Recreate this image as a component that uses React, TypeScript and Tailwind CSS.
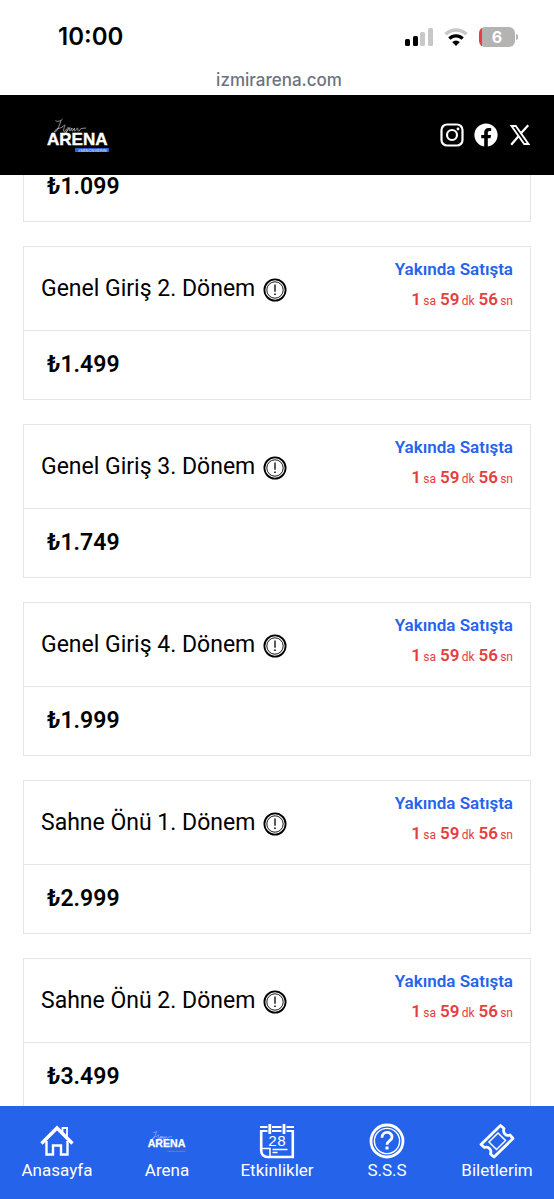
import React from 'react'
import { FaFacebook } from 'react-icons/fa'

interface Ticket {
  title?: string
  price: string
}

const tickets: Ticket[] = [
  { price: '₺1.099' },
  { title: 'Genel Giriş 2. Dönem', price: '₺1.499' },
  { title: 'Genel Giriş 3. Dönem', price: '₺1.749' },
  { title: 'Genel Giriş 4. Dönem', price: '₺1.999' },
  { title: 'Sahne Önü 1. Dönem', price: '₺2.999' },
  { title: 'Sahne Önü 2. Dönem', price: '₺3.499' },
]

const countdown = [
  { value: '1', unit: 'sa' },
  { value: '59', unit: 'dk' },
  { value: '56', unit: 'sn' },
]

function StatusBar() {
  return (
    <div className="flex h-[95px] shrink-0 flex-col bg-white font-['Inter',sans-serif]">
      <div className="flex h-[74px] items-center justify-between pr-9 pl-[58px]">
        <span className="text-2xl font-semibold text-black">10:00</span>
        <div className="flex items-center gap-[11px]">
          <svg className="h-[18px] w-7" viewBox="0 0 28 18">
            <rect x="0" y="11" width="5" height="7" rx="1.5" fill="#000" />
            <rect x="8" y="8" width="5" height="10" rx="1.5" fill="#000" />
            <rect x="15" y="4" width="5" height="14" rx="1.5" fill="#c8c8c8" />
            <rect x="23" y="0" width="5" height="18" rx="1.5" fill="#c8c8c8" />
          </svg>
          <svg className="h-[18px] w-6" viewBox="0 0 24 18" fill="none" strokeWidth="3.4">
            <path d="M1.5 6.3a15 15 0 0 1 21 0" stroke="#c8c8c8" />
            <path d="M5.4 10.6a9.4 9.4 0 0 1 13.2 0" stroke="#000" />
            <path d="M12 18l-3.8-3.9a5.4 5.4 0 0 1 7.6 0z" fill="#000" />
          </svg>
          <div className="flex items-center gap-px">
            <div className="flex h-5 w-9 items-center justify-center overflow-hidden rounded-md bg-linear-to-r from-[#ee3a3a] from-8% to-[#b3b3b3] to-8% text-base font-bold text-white">
              6
            </div>
            <div className="h-[6px] w-[2px] rounded-r-full bg-[#b3b3b3]" />
          </div>
        </div>
      </div>
      <div className="pl-1 text-center text-[17px] leading-3 font-medium text-[#6b7280]">izmirarena.com</div>
    </div>
  )
}

interface LogoProps {
  className: string
  tagFill: string
  tagText: string
}

function Logo({ className, tagFill, tagText }: LogoProps) {
  return (
    <svg className={className} viewBox="0 0 64 36" role="img" aria-label="İzmir Arena">
      <path
        d="M9.5 3.5c1.5 1.5 4.5 1 7-1.500M15 3.5c-1 4-3 8-5 11-1 1-2 .5-1-1 2-2.5 6-2 8-4 1-1.500 2-2 2-1-1 2-2 6-1 6 2 0 2-3 4-4 1 0 1 .5 0 1.500-1 2-3 7-4 7s0-3 3-5l3-3.500c0 2-1 3.500 0 3.500l2-3c0 2-.5 3 .5 3l2-3c0 2-.5 3 .5 3s1.500-3 2.500-3-.5 3 1 3 1.500-2 2.500-2.500l5-.5"
        fill="none"
        stroke="#fff"
        strokeWidth="0.7"
        opacity="0.8"
      />
      <text x="1" y="28" fontFamily="Liberation Sans, sans-serif" fontWeight="700" fontSize="17" fill="#fff" stroke="#fff" strokeWidth="0.4">
        ARENA
      </text>
      <rect x="29" y="31" width="34" height="4" fill={tagFill} />
      <text x="32" y="35" fontFamily="Liberation Sans, sans-serif" fontWeight="700" fontSize="4" fill={tagText}>
        #SENONVERIN
      </text>
    </svg>
  )
}

function InstagramIcon() {
  return (
    <svg className="size-6" viewBox="0 0 24 24" fill="none" stroke="currentColor">
      <rect x="1.5" y="1.5" width="21" height="21" rx="5.5" strokeWidth="2.2" />
      <circle cx="12" cy="12" r="5" strokeWidth="2.2" />
      <circle cx="18" cy="6" r="1.4" fill="currentColor" stroke="none" />
    </svg>
  )
}

function XIcon() {
  return (
    <svg className="size-6" viewBox="0 0 24 24" fill="none" stroke="currentColor">
      <path d="M3.5 3h4.3l12.7 18h-4.300z" strokeWidth="1.9" />
      <path d="M20.2 2.200l-7.700 8.600M10.500 13.300L3.200 21.700" strokeWidth="2.2" />
    </svg>
  )
}

function InfoIcon() {
  return (
    <svg className="size-6" viewBox="0 0 24 24" fill="none" stroke="#000">
      <circle cx="12" cy="12" r="10.6" strokeWidth="1.8" />
      <circle cx="12" cy="12" r="8.2" strokeWidth="0.9" />
      <path d="M12 6.5v7.3" strokeWidth="1.3" />
      <path d="M12 15.6v1.5" strokeWidth="1.5" />
    </svg>
  )
}

function HomeIcon() {
  return (
    <svg className="size-9" viewBox="0 0 36 36" fill="none" stroke="#fff" strokeWidth="2.4">
      <path d="M2.5 20.5L18 5l15.5 15.5" strokeWidth="3.4" />
      <path d="M23.5 9V5H28v9" strokeWidth="1.8" />
      <path d="M7.5 18v13.5H14v-9h8v9h6.500V18" />
    </svg>
  )
}

function CalendarIcon() {
  return (
    <svg className="size-9" viewBox="0 0 36 36" fill="none" stroke="#fff">
      <path d="M1 4h7.500M13 4h9.500M27.500 4H35" strokeWidth="2" />
      <path d="M1 8h7.500M13 8h9.500M27.500 8H35" strokeWidth="2" />
      <path d="M10.800 1v10M25 1v10" strokeWidth="2.8" />
      <path d="M2.200 7v20.500c0 4 3 6.500 6 6.500h25.600V7" strokeWidth="2.6" />
      <path d="M3 25.500h8V34M13.500 26.500h15M13.500 29.500h5" strokeWidth="1.5" />
      <text x="9" y="23" fontFamily="Liberation Mono, monospace" fontSize="15" fill="#fff" stroke="none">
        28
      </text>
    </svg>
  )
}

function HelpIcon() {
  return (
    <svg className="size-9" viewBox="0 0 36 36" fill="none" stroke="#fff">
      <circle cx="18" cy="18" r="16" strokeWidth="2.8" />
      <circle cx="18" cy="18" r="12.6" strokeWidth="1.4" />
      <path d="M13 14.8c0-7 10-7 10-.6 0 3.600-5 3.400-5 7.600" strokeWidth="2.8" />
      <path d="M18 23.5v3" strokeWidth="3" />
    </svg>
  )
}

function TicketIcon() {
  return (
    <svg className="size-9" viewBox="0 0 36 36" fill="none" stroke="#fff">
      <path
        d="M2 21.500L21.500 2.500l3.500 3c-1.500 4.500 2 8 6 6.500l3 3.500L15 34l-3.500-3c1.500-4.500-2-8-6-6.500z"
        strokeWidth="2.8"
        strokeLinejoin="round"
      />
      <path d="M10 19l9-9 7.500 7.500-9 9z" strokeWidth="1.5" />
    </svg>
  )
}

function TicketCard({ title, price }: Ticket) {
  return (
    <article className="border border-[#e5e5e5] bg-white">
      {title && (
        <div className="flex h-[84px] items-center justify-between border-b border-[#e5e5e5] px-[17px]">
          <div className="flex items-center gap-2">
            <h2 className="text-[23px] leading-8">{title}</h2>
            <button type="button" aria-label="Bilgi" className="mt-0.5">
              <InfoIcon />
            </button>
          </div>
          <div className="pb-2 text-right">
            <p className="text-[17px] leading-6 font-semibold text-[#2563eb]">Yakında Satışta</p>
            <p className="flex items-baseline justify-end gap-1 pt-1 leading-7 text-[#e53e3e]">
              {countdown.map((part) => (
                <span key={part.unit} className="text-[17px] font-semibold">
                  {part.value} <span className="-ml-0.5 text-xs font-normal">{part.unit}</span>
                </span>
              ))}
            </p>
          </div>
        </div>
      )}
      <p className="flex h-[68px] items-center px-[23px] text-[23px] leading-6 font-semibold">{price}</p>
    </article>
  )
}

const navItems = [
  { label: 'Anasayfa', icon: <HomeIcon /> },
  { label: 'Arena', icon: <Logo className="h-9 w-10" tagFill="#3a66c8" tagText="#8a93b0" /> },
  { label: 'Etkinlikler', icon: <CalendarIcon /> },
  { label: 'S.S.S', icon: <HelpIcon /> },
  { label: 'Biletlerim', icon: <TicketIcon /> },
]

export default function App() {
  return (
    <div className="flex h-screen flex-col overflow-hidden bg-white font-['Roboto',sans-serif] text-black">
      <StatusBar />
      <header className="flex h-20 shrink-0 items-center justify-between bg-black pr-[22px] pl-[46px]">
        <a href="#anasayfa">
          <Logo className="h-9 w-16" tagFill="#2f62d9" tagText="#bfd3ff" />
        </a>
        <div className="flex items-center gap-[10px] text-white">
          <a href="#instagram" aria-label="Instagram">
            <InstagramIcon />
          </a>
          <a href="#facebook" aria-label="Facebook">
            <FaFacebook className="size-6" />
          </a>
          <a href="#x" aria-label="X">
            <XIcon />
          </a>
        </div>
      </header>
      <main className="min-h-0 flex-1 overflow-hidden px-[23px]">
        <div className="-mt-[23px] flex flex-col gap-6">
          {tickets.map((ticket) => (
            <TicketCard key={ticket.price} {...ticket} />
          ))}
        </div>
      </main>
      <nav className="grid h-[93px] shrink-0 grid-cols-5 bg-[#2563eb] px-[2px] pt-[17px] text-white">
        {navItems.map((item) => (
          <a key={item.label} href={'#' + item.label.toLowerCase()} className="flex flex-col items-center text-[17px] leading-[22px]">
            {item.icon}
            {item.label}
          </a>
        ))}
      </nav>
    </div>
  )
}
